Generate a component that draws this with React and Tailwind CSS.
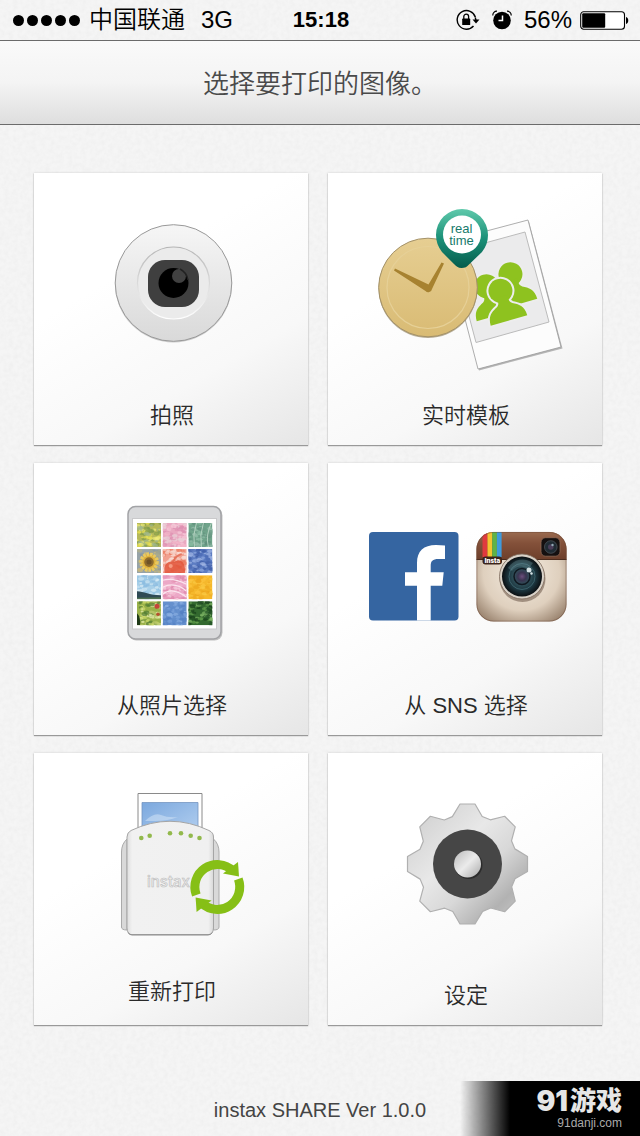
import React from 'react';

function PaperTexture() {
  return (
    <svg className="absolute inset-0 -z-10 h-full w-full" aria-hidden="true">
      <filter id="paper" x="0" y="0" width="100%" height="100%">
        <feTurbulence type="fractalNoise" baseFrequency="0.22" numOctaves="3" seed="4" />
        <feColorMatrix values="0 0 0 0 0.5  0 0 0 0 0.5  0 0 0 0 0.5  0.16 0 0 0 -0.05" />
      </filter>
      <rect width="100%" height="100%" filter="url(#paper)" />
    </svg>
  );
}

function LockIcon() {
  return (
    <svg width="24" height="22" viewBox="0 0 24 22" aria-label="Rotation lock">
      <path d="M19.4 8.2A9.3 9.3 0 1 0 17.5 17" fill="none" stroke="#000" strokeWidth="1.4" />
      <path d="M16.500 10.500h7L20 14.500z" />
      <path d="M19.3 8.5l.7 3" stroke="#000" strokeWidth="1.4" />
      <rect x="6.2" y="9.6" width="8" height="6.4" rx=".6" />
      <path d="M7.8 10V7.6a2.4 2.4 0 0 1 4.8 0V10" fill="none" stroke="#000" strokeWidth="1.3" />
    </svg>
  );
}

function AlarmIcon() {
  return (
    <svg width="20" height="20" viewBox="0 0 20 20" aria-label="Alarm">
      <circle cx="10" cy="10.5" r="8.8" />
      <path d="M10.5 5.5v5H6.5" fill="none" stroke="#fff" strokeWidth="1.5" />
      <path d="M.8 5.5A4 4 0 0 1 5 1.2M19.2 5.5A4 4 0 0 0 15 1.2" fill="none" stroke="#000" strokeWidth="1.2" />
    </svg>
  );
}

function BatteryIcon() {
  return (
    <svg width="49" height="19" viewBox="0 0 49 19" aria-label="Battery">
      <rect x=".7" y=".7" width="43.8" height="17.6" rx="3" fill="#fff" stroke="#000" strokeWidth="1.1" />
      <rect x="2.2" y="2.2" width="23" height="14.6" rx="1" />
      <path d="M46 6c3 .5 3 6.5 0 7z" />
    </svg>
  );
}

function StatusBar() {
  return (
    <div className="grid h-10 grid-cols-[1fr_auto_1fr] items-center pl-[13px] pr-[11px] text-2xl font-[350] text-black">
      <div className="flex items-center">
        <div className="mr-[9px] flex gap-[3px]">
          {[0, 1, 2, 3, 4].map((dot) => (
            <span key={dot} className="h-[11px] w-[11px] rounded-full bg-black" />
          ))}
        </div>
        <span className="mr-4">中国联通</span>
        <span>3G</span>
      </div>
      <div className="text-[22px] font-bold">15:18</div>
      <div className="flex items-center justify-end">
        <LockIcon />
        <span className="ml-3 mr-3"><AlarmIcon /></span>
        <span className="mr-2">56%</span>
        <BatteryIcon />
      </div>
    </div>
  );
}

function CameraIcon() {
  return (
    <svg className="h-[220px] w-full" viewBox="34 173 274 220" aria-hidden="true">
      <defs>
        <linearGradient id="cam" x1="0" y1="0" x2="0" y2="1">
          <stop offset="0" stopColor="#f6f6f6" />
          <stop offset="1" stopColor="#d9d9d9" />
        </linearGradient>
        <linearGradient id="camRing" x1="0" y1="0" x2="0" y2="1">
          <stop offset="0" stopColor="#b5b5b5" />
          <stop offset=".5" stopColor="#dadada" />
          <stop offset="1" stopColor="#fff" />
        </linearGradient>
      </defs>
      <circle cx="173.5" cy="284" r="58.5" fill="#aaa" opacity=".6" />
      <circle cx="173.5" cy="283" r="58.3" fill="url(#cam)" stroke="#999" strokeWidth="1" />
      <circle cx="173.5" cy="283" r="36" fill="#ebebeb" stroke="url(#camRing)" strokeWidth="1.2" />
      <rect x="148" y="260" width="51" height="47" rx="17" fill="#3f3f3f" />
      <circle cx="173.5" cy="283" r="15" />
      <circle cx="179" cy="276" r="7" fill="#414141" />
      <path d="M180 269A15 15 0 0 1 188 280" fill="none" stroke="#222" strokeWidth="1.5" />
    </svg>
  );
}

function Person({ x, y }) {
  return (
    <g transform={`translate(${x} ${y}) rotate(-16)`} fill="#8ec21f">
      <g stroke="#ededed" strokeWidth="4">
        <circle cx="0" cy="-31" r="12" />
        <path d="M-19 0C-19-10-14-13-8-16C-5-18-5-21-6-25H6C5-21 5-18 8-16C14-13 19-10 19 0Z" />
      </g>
      <circle cx="0" cy="-31" r="12" />
      <path d="M-19 0C-19-10-14-13-8-16C-5-18-5-21-6-25H6C5-21 5-18 8-16C14-13 19-10 19 0Z" />
    </g>
  );
}

function RealtimeIcon() {
  return (
    <svg className="h-[220px] w-full" viewBox="328 173 274 220" aria-hidden="true">
      <defs>
        <linearGradient id="clock" x1="0" y1="0" x2="0" y2="1">
          <stop offset="0" stopColor="#e6ce92" />
          <stop offset="1" stopColor="#d9bb74" />
        </linearGradient>
        <linearGradient id="pin" x1="0" y1="0" x2="0" y2="1">
          <stop offset="0" stopColor="#5fc9ab" />
          <stop offset=".5" stopColor="#1b9078" />
          <stop offset="1" stopColor="#045c4c" />
        </linearGradient>
      </defs>
      <path d="M446 243.5L529 221.5L562.5 348.5L479 370.5Z" fill="#888" opacity=".6" />
      <path d="M445 242L528 220L561 347L478 369Z" fill="#fcfcfc" stroke="#999" strokeWidth=".8" />
      <path d="M452 252L525 232L549 322L476 342.5Z" fill="#ebebec" stroke="#bbb" strokeWidth="1" />
      <Person x={519} y={304} />
      <Person x={495} y={316} />
      <Person x={509} y={320.5} />
      <circle cx="428" cy="288.5" r="49.5" fill="#8a7c5a" opacity=".6" />
      <circle cx="428" cy="287.5" r="49.3" fill="url(#clock)" stroke="#a39168" strokeWidth="1" />
      <circle cx="428" cy="287.5" r="41" fill="none" stroke="#e6d097" strokeWidth="1.2" />
      <path d="M395 268.5L428.5 284.5L441.5 262.5L444 263.5L432 289A3.8 3.8 0 0 1 425.500 291L394 270.5Z" fill="#a78230" />
      <path d="M461.5 268C458 268 456 266 454 264L442 252C438 247 436 241 436 235A26 26 0 0 1 488 235C488 241 486 247 482 252L469 264.500C467 267 465 268 461.500 268Z" fill="url(#pin)" />
      <circle cx="462" cy="234.5" r="19" fill="#fff" />
      <g fill="#177a6b" fontFamily="'Liberation Sans', sans-serif" fontSize="13" textAnchor="middle">
        <text x="461.5" y="233">real</text>
        <text x="461.5" y="245">time</text>
      </g>
    </svg>
  );
}

// base colour followed by the colours of the blobs scattered over it
const photos = [
  ['#b5b85a', '#e5de4e', '#7f9a4a', '#f1ec7a', '#9fb78d'],
  ['#e9a8c0', '#f6c9d8', '#dd8fb0', '#f3b8ca', '#e8d3d8'],
  ['#6fa38a', '#8fc0a6', '#5f8f7c', '#98bfac', '#6c9c88'],
  ['#97a3a8', '#c9b77c', '#8896a0', '#b4b08a', '#a3a78f'],
  ['#f1a090', '#fbe3dc', '#ea7558', '#f8cec4', '#f6d8d0'],
  ['#5c7cc2', '#8fa8de', '#3f5ca6', '#a3b6e4', '#4a69b4'],
  ['#9cc9e6', '#cfe6f2', '#8abbe0', '#dbecf5', '#a9d0e8'],
  ['#eca8c7', '#f7d0df', '#de85a9', '#f2b9d0', '#e695b7'],
  ['#f5b82c', '#fac943', '#eda51d', '#fdc43e', '#f0ac24'],
  ['#9ab24a', '#e9efb0', '#4f7b32', '#cfdc6c', '#b7c56a'],
  ['#6590cd', '#8bb0e2', '#5480c3', '#7ba3dc', '#5c8acb'],
  ['#33692f', '#5f9c4a', '#173f1a', '#7fb765', '#245426'],
];

// fractional part of a scaled sine, enough to scatter blobs evenly
const scatter = (n) => {
  const v = Math.sin(n * 12.9898) * 43758.5453;
  return v - Math.floor(v);
};

function Photo({ colors, index }) {
  const x = 137 + (index % 3) * 25.7;
  const y = 523 + Math.floor(index / 3) * 26.1;
  const blobs = Array.from({ length: 70 }, (_, i) => ({
    cx: scatter(i + index * 100 + 1) * 24,
    cy: scatter(i + index * 100 + 2000) * 24,
    r: 0.8 + scatter(i + 5000) * 1.3,
    fill: colors[1 + (i % 4)],
  }));
  return (
    <svg x={x} y={y} width="24" height="24" viewBox="0 0 24 24">
      <rect width="24" height="24" fill={colors[0]} />
      {blobs.map((b, i) => (
        <ellipse key={i} cx={b.cx} cy={b.cy} rx={b.r * 1.5} ry={b.r} fill={b.fill} opacity=".7" />
      ))}
      {index === 3 && (
        <>
          <circle cx="12" cy="13" r="8" fill="#dfb03a" stroke="#e8c860" strokeWidth="3.5" strokeDasharray="2.5 1" />
          <circle cx="12" cy="13" r="4.8" fill="#8c6a2d" />
          <circle cx="12" cy="13" r="2.5" fill="#6f5226" />
        </>
      )}
      {index === 4 && (
        <>
          <path d="M2 24C0 15 6 11 12 13C17 8 24 14 22 24Z" fill="#e2553a" opacity=".85" />
          <path d="M10 13Q14 6 19 5" fill="none" stroke="#e0644a" strokeWidth="2" opacity=".7" />
          <circle cx="8" cy="17" r="2" fill="#f59a80" />
        </>
      )}
      {index === 6 && (
        <>
          <path d="M0 16C7 16 12 20 24 20V24H0Z" fill="#2f4a55" />
          <path d="M0 22.5L24 22V24H0Z" fill="#4f7052" />
        </>
      )}
      {index === 7 && <path d="M0 5Q10 2 24 9M0 12Q12 6 24 16M0 19Q9 11 24 22" fill="none" stroke="#fbe4ee" strokeWidth="1.2" />}
      {index === 2 && <path d="M8 0Q4 12 6 24M15 0Q11 12 13 24M23 0Q17 12 20 24" fill="none" stroke="#b4d2c0" strokeWidth="1" />}
      {index === 9 && (
        <>
          <circle cx="20" cy="5" r="2.500" fill="#c4473a" />
          <circle cx="21" cy="13" r="1.800" fill="#b5502f" />
          <path d="M0 12Q4 16 3 24H0Z" fill="#1f3a18" />
        </>
      )}
    </svg>
  );
}

function TabletIcon() {
  return (
    <svg className="h-[220px] w-full" viewBox="34 463 274 220" aria-hidden="true">
      <rect x="128.5" y="507.5" width="94" height="133" rx="8" fill="#888" opacity=".5" />
      <rect x="128" y="506.5" width="93" height="132.5" rx="7.5" fill="#d8d9db" stroke="#a2a3a6" strokeWidth="1.5" />
      <rect x="132.5" y="518.5" width="84" height="110.5" fill="#fff" stroke="#c9c9cb" strokeWidth="1" />
      {photos.map((colors, index) => (
        <Photo key={index} colors={colors} index={index} />
      ))}
    </svg>
  );
}

function SnsIcon() {
  return (
    <svg className="h-[220px] w-full" viewBox="328 463 274 220" aria-hidden="true">
      <defs>
        <clipPath id="instaClip">
          <rect x="476.5" y="532" width="90" height="89.5" rx="17" />
        </clipPath>
        <linearGradient id="leather" x1="0" y1="0" x2="0" y2="1">
          <stop offset="0" stopColor="#9a6b50" />
          <stop offset=".4" stopColor="#84513a" />
          <stop offset="1" stopColor="#6d3f2b" />
        </linearGradient>
        <radialGradient id="cream" cx=".5" cy=".45" r=".7">
          <stop offset="0" stopColor="#f4ece0" />
          <stop offset=".6" stopColor="#dfd0be" />
          <stop offset="1" stopColor="#8d7560" />
        </radialGradient>
        <radialGradient id="lens">
          <stop offset="0" stopColor="#6b4f7c" />
          <stop offset=".2" stopColor="#3a3450" />
          <stop offset=".4" stopColor="#2f5059" />
          <stop offset=".7" stopColor="#1b343d" />
          <stop offset="1" stopColor="#0b0f12" />
        </radialGradient>
      </defs>
      <rect x="369" y="532" width="89.5" height="88.5" rx="4" fill="#3565a1" />
      <path d="M417 620.500V585.700H405V572.300H417V563C417 551 423.500 545 436 545Q441 545 445 545.600V559H438.500C432.500 559 430.700 561 430.700 566V572.300H443.700L442.300 585.700H430.700V620.500Z" fill="#fff" />
      <g clipPath="url(#instaClip)">
        <rect x="476" y="532" width="91" height="90" fill="url(#cream)" />
        <rect x="476" y="532" width="91" height="27.5" fill="url(#leather)" />
        <path d="M476 559.5H567" stroke="#4a2b1d" strokeWidth="1" />
        <path d="M482.5 532h5v25h-5z" fill="#e03a3e" />
        <path d="M487.5 532h4.700v25h-4.700z" fill="#f4c430" />
        <path d="M492.2 532h4.700v25h-4.700z" fill="#5fb447" />
        <path d="M496.9 532h4.700v25h-4.700z" fill="#3f9bdc" />
        <rect x="482.5" y="556.5" width="19.5" height="8" rx="3" fill="#3c241a" />
      </g>
      <text x="492.3" y="563.3" fill="#fff" fontFamily="Roboto, sans-serif" fontWeight="900" fontSize="7" textAnchor="middle">Insta</text>
      <rect x="476.9" y="532.4" width="89.2" height="88.7" rx="17" fill="none" stroke="#6c4836" strokeWidth=".8" opacity=".6" />
      <circle cx="522.5" cy="579" r="23" fill="#5e4839" opacity=".5" />
      <circle cx="522" cy="576.5" r="22.5" fill="#d9d2c8" stroke="#7d6a5b" strokeWidth=".8" />
      <circle cx="522" cy="576.5" r="20" fill="url(#lens)" />
      <circle cx="522" cy="576.5" r="13" fill="none" stroke="#46717a" strokeWidth="1" opacity=".7" />
      <circle cx="522" cy="576.5" r="8" fill="none" stroke="#101820" strokeWidth="1.5" />
      <path d="M508 568A17 17 0 0 1 533 563L528 569A11 11 0 0 0 512 571Z" fill="#7fa5ad" opacity=".3" />
      <circle cx="529" cy="570" r="2.5" fill="#d7e3e6" />
      <circle cx="531.5" cy="573.5" r="1.2" fill="#d7e3e6" />
      <rect x="541" y="537.7" width="19" height="18.5" rx="4.5" fill="#151010" stroke="#8f6a55" strokeWidth=".8" />
      <circle cx="550.8" cy="547" r="6.3" fill="#202b33" stroke="#4b5258" strokeWidth=".8" />
      <circle cx="550.8" cy="547" r="2.8" fill="#4a3d58" />
      <circle cx="552.5" cy="545" r="1.2" fill="#93a8b4" />
    </svg>
  );
}

function PrinterIcon() {
  return (
    <svg className="h-[216px] w-full" viewBox="34 753 274 216" aria-hidden="true">
      <defs>
        <linearGradient id="sky" x1="0" y1="0" x2="1" y2="1">
          <stop offset="0" stopColor="#7ba8de" />
          <stop offset="1" stopColor="#b4d0f0" />
        </linearGradient>
        <linearGradient id="printer" x1="0" y1="0" x2="1" y2="0">
          <stop offset="0" stopColor="#dedede" />
          <stop offset=".06" stopColor="#f1f1f1" />
          <stop offset=".94" stopColor="#f0f0f0" />
          <stop offset="1" stopColor="#d8d8d8" />
        </linearGradient>
        <g id="arrow">
          <path d="M196.3 895A22.5 22.5 0 0 1 232.8 870.700" fill="none" stroke="#86bf16" strokeWidth="9" />
          <path d="M238 862L239 876.500L223 873.500Z" fill="#86bf16" />
        </g>
      </defs>
      <path d="M138 835V793.5H202V835Z" fill="#fff" stroke="#8a8a8a" strokeWidth="1" />
      <path d="M142 802.5H198V835H142Z" fill="url(#sky)" stroke="#7595c0" strokeWidth=".8" />
      <path d="M145 821Q154 812 161 815T178 817Q168 821 155 821Z" fill="#d8e7f8" opacity=".5" />
      <path d="M127 839Q121.5 844 121.5 852V927Q121.5 930 127 930ZM213.5 839Q219 844 219 852V927Q219 930 213.5 930Z" fill="#d9d9d9" stroke="#aaa" strokeWidth="1" />
      <path d="M127 837Q127 832.5 131 830.5Q170 812 209 830.5Q213.5 832.5 213.5 837V928Q213 934.5 209 934.5H131Q127.5 934.5 127 928Z" fill="url(#printer)" stroke="#a5a5a5" strokeWidth="1" />
      <path d="M128.5 932.5Q129 935 132 935H208Q211 935 212 932.5" fill="none" stroke="#8c8c8c" strokeWidth="1" />
      <g fill="#92b94c">
        <circle cx="141.3" cy="838" r="2.3" />
        <circle cx="149.7" cy="835.7" r="2.3" />
        <circle cx="170" cy="833.3" r="2.3" />
        <circle cx="181" cy="833.3" r="2.3" />
        <circle cx="190.7" cy="835.7" r="2.3" />
        <circle cx="199.5" cy="838" r="2.3" />
      </g>
      <text x="168.5" y="886.5" fill="#eee" stroke="#bdbdbd" strokeWidth=".6" fontFamily="Inter, sans-serif" fontWeight="500" fontSize="15" textAnchor="middle">instax</text>
      <use href="#arrow" />
      <use href="#arrow" transform="rotate(180 217.3 887)" />
    </svg>
  );
}

const toothPoints = [[-7.5, -60], [7.5, -60], [14.7, -47.5], [22.8, -44.2]];

const gearPoints = Array.from({ length: 8 }, (_, i) => {
  const a = (i * Math.PI) / 4;
  return toothPoints
    .map(([x, y]) => `${467.5 + x * Math.cos(a) - y * Math.sin(a)},${864 + x * Math.sin(a) + y * Math.cos(a)}`)
    .join(' ');
}).join(' ');

function GearIcon() {
  return (
    <svg className="h-[220px] w-full" viewBox="328 753 274 220" aria-hidden="true">
      <defs>
        <linearGradient id="steel" x1="0" y1="0" x2="1" y2="1">
          <stop offset=".1" stopColor="#d2d2d2" />
          <stop offset=".4" stopColor="#e8e8e8" />
          <stop offset=".6" stopColor="#d8d8d8" />
          <stop offset=".8" stopColor="#b2b2b2" />
          <stop offset="1" stopColor="#d0d0d0" />
        </linearGradient>
        <linearGradient id="knob" x1="0" y1="0" x2="1" y2="1">
          <stop offset=".1" stopColor="#c4c4c4" />
          <stop offset=".5" stopColor="#ebebeb" />
          <stop offset=".9" stopColor="#b5b5b5" />
        </linearGradient>
      </defs>
      <polygon points={gearPoints} fill="url(#steel)" stroke="#b0b0b0" strokeWidth="1.2" strokeLinejoin="round" />
      <circle cx="467.5" cy="864" r="34.5" fill="#464646" />
      <circle cx="468.5" cy="865" r="14" fill="#2c2c2c" />
      <circle cx="467.5" cy="864" r="13.5" fill="url(#knob)" />
    </svg>
  );
}

const items = [
  { label: '拍照', Icon: CameraIcon },
  { label: '实时模板', Icon: RealtimeIcon },
  { label: '从照片选择', Icon: TabletIcon },
  { label: '从 SNS 选择', Icon: SnsIcon },
  { label: '重新打印', Icon: PrinterIcon },
  { label: '设定', Icon: GearIcon },
];

function App() {
  return (
    <div className="relative isolate flex min-h-screen flex-col bg-[#f5f5f5] font-['Liberation_Sans','Noto_Sans_CJK_SC',sans-serif]">
      <PaperTexture />
      <StatusBar />

      <header className="flex h-[85px] items-center justify-center border-y border-[#6b6b6b] bg-linear-to-b from-[#fafafa] via-[#f4f4f4] to-[#dedede] pt-1">
        <h1 className="text-[26px] font-[350] text-[#4a4a4a]">选择要打印的图像。</h1>
      </header>

      <main className="grid grid-cols-2 gap-x-5 gap-y-[18px] pb-4 pl-[34px] pr-[38px] pt-12">
        {items.map(({ label, Icon }) => (
          <button
            key={label}
            className="flex h-[272px] flex-col bg-linear-150 from-white from-35% via-[#f8f8f8] via-70% to-[#e6e6e6] shadow-[0_1px_1px_#999,0_0_2px_#ccc]"
          >
            <Icon />
            <span className="mt-[7px] w-full pl-0.5 text-center text-[22px] leading-8 font-[350] text-[#2a2a2a]">{label}</span>
          </button>
        ))}
      </main>

      <footer className="flex grow items-end justify-center pb-3">
        <p className="text-xl text-[#444]">instax SHARE Ver 1.0.0</p>
      </footer>

      <div className="absolute bottom-0 right-0 flex h-[55px] w-[180px] flex-col items-end bg-linear-to-r from-transparent to-black to-[50px] pr-[18px] pt-1.5">
        <div className="flex items-center gap-0.5 text-[26px] leading-[28px] font-black text-[#e6e6e6]">
          <span className="font-['Inter',sans-serif] text-[28px]">91</span>
          <span>游戏</span>
        </div>
        <span className="text-xs text-[#aaa]">91danji.com</span>
      </div>
    </div>
  );
}

export default App;
